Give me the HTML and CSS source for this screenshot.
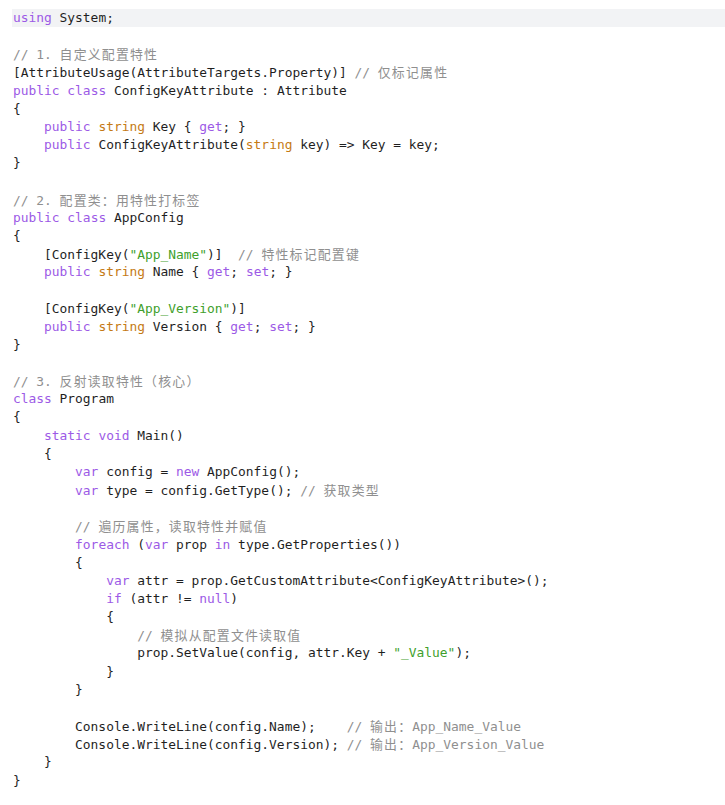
FILE: index.html
```html
<!DOCTYPE html>
<html lang="zh-CN">
<head>
<meta charset="utf-8">
<title>Code</title>
<link rel="stylesheet" href="styles.css">
</head>
<body>
<div class="code">
<div class="ln hl"><span class="kw">using</span> System;</div>
<div class="ln"> </div>
<div class="ln"><span class="cm">// 1. <span class="zh">自定义配置特性</span></span></div>
<div class="ln">[AttributeUsage(AttributeTargets.Property)] <span class="cm">// <span class="zh">仅标记属性</span></span></div>
<div class="ln"><span class="kw">public</span> <span class="kw">class</span> ConfigKeyAttribute : Attribute</div>
<div class="ln">{</div>
<div class="ln">    <span class="kw">public</span> <span class="ty">string</span> Key { <span class="kw">get</span>; }</div>
<div class="ln">    <span class="kw">public</span> ConfigKeyAttribute(<span class="ty">string</span> key) =&gt; Key = key;</div>
<div class="ln">}</div>
<div class="ln"> </div>
<div class="ln"><span class="cm">// 2. <span class="zh">配置类：用特性打标签</span></span></div>
<div class="ln"><span class="kw">public</span> <span class="kw">class</span> AppConfig</div>
<div class="ln">{</div>
<div class="ln">    [ConfigKey(<span class="st">"App_Name"</span>)]  <span class="cm">// <span class="zh">特性标记配置键</span></span></div>
<div class="ln">    <span class="kw">public</span> <span class="ty">string</span> Name { <span class="kw">get</span>; <span class="kw">set</span>; }</div>
<div class="ln"> </div>
<div class="ln">    [ConfigKey(<span class="st">"App_Version"</span>)]</div>
<div class="ln">    <span class="kw">public</span> <span class="ty">string</span> Version { <span class="kw">get</span>; <span class="kw">set</span>; }</div>
<div class="ln">}</div>
<div class="ln"> </div>
<div class="ln"><span class="cm">// 3. <span class="zh">反射读取特性（核心）</span></span></div>
<div class="ln"><span class="kw">class</span> Program</div>
<div class="ln">{</div>
<div class="ln">    <span class="kw">static</span> <span class="kw">void</span> Main()</div>
<div class="ln">    {</div>
<div class="ln">        <span class="kw">var</span> config = <span class="kw">new</span> AppConfig();</div>
<div class="ln">        <span class="kw">var</span> type = config.GetType(); <span class="cm">// <span class="zh">获取类型</span></span></div>
<div class="ln"> </div>
<div class="ln">        <span class="cm">// <span class="zh">遍历属性，读取特性并赋值</span></span></div>
<div class="ln">        <span class="kw">foreach</span> (<span class="kw">var</span> prop <span class="kw">in</span> type.GetProperties())</div>
<div class="ln">        {</div>
<div class="ln">            <span class="kw">var</span> attr = prop.GetCustomAttribute&lt;ConfigKeyAttribute&gt;();</div>
<div class="ln">            <span class="kw">if</span> (attr != <span class="kw">null</span>)</div>
<div class="ln">            {</div>
<div class="ln">                <span class="cm">// <span class="zh">模拟从配置文件读取值</span></span></div>
<div class="ln">                prop.SetValue(config, attr.Key + <span class="st">"_Value"</span>);</div>
<div class="ln">            }</div>
<div class="ln">        }</div>
<div class="ln"> </div>
<div class="ln">        Console.WriteLine(config.Name);    <span class="cm">// <span class="zh">输出：</span>App_Name_Value</span></div>
<div class="ln">        Console.WriteLine(config.Version); <span class="cm">// <span class="zh">输出：</span>App_Version_Value</span></div>
<div class="ln">    }</div>
<div class="ln">}</div>
</div>
</body>
</html>
```

FILE: styles.css
```css
html, body {
  margin: 0;
  padding: 0;
  background: #ffffff;
}

.code {
  margin: 9px 0 0 12px;
  font-family: "DejaVu Sans Mono", "Liberation Mono", "Noto Sans CJK SC", monospace;
  font-size: 12.9px;
  color: #1f1f1f;
}

.ln {
  height: 18.17px;
  line-height: 18.17px;
  white-space: pre;
  padding-left: 1px;
  overflow: hidden;
}

.hl {
  background: #f2f3f5;
}

.kw { color: #9c5ae6; }
.ty { color: #c57a14; }
.st { color: #3f9f2c; }
.cm { color: #8f8f8f; }

.zh {
  font-family: "Noto Sans CJK SC", sans-serif;
  letter-spacing: 1.2px;
}
```
